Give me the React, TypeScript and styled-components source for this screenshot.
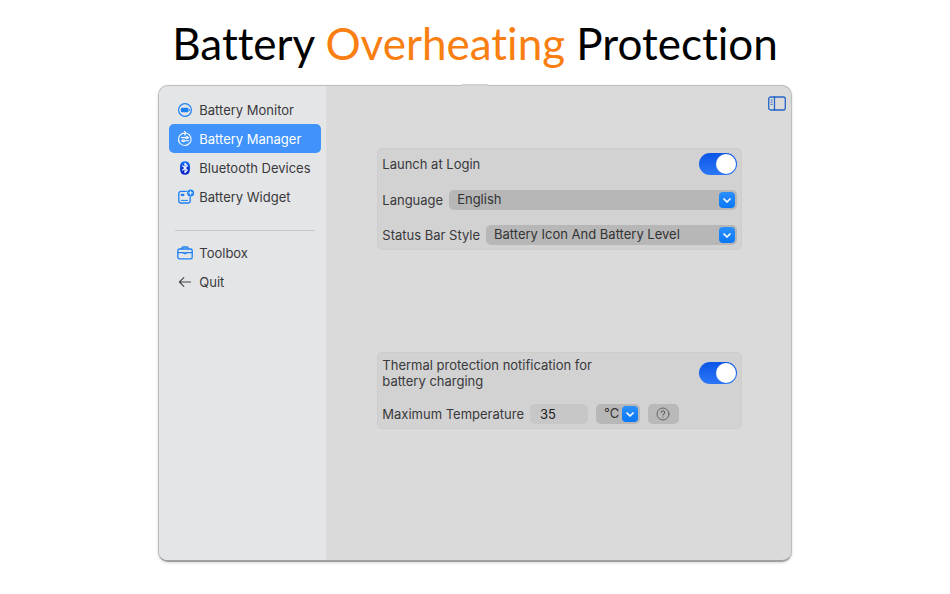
import React, { useState } from "react";
import styled, { createGlobalStyle } from "styled-components";

const GlobalStyle = createGlobalStyle`
  *, *::before, *::after { box-sizing: border-box; }
  body { margin: 0; background: #fff; }
  button, input, select { font: inherit; color: inherit; margin: 0; border: 0; }
`;

const Page = styled.div`
  display: flex;
  flex-direction: column;
  align-items: center;
  min-height: 100vh;
  padding: 0 16px 32px;
  font-family: Inter, "Liberation Sans", sans-serif;
  font-size: 13px;
  line-height: 16px;
  color: #39393b;
`;

const Title = styled.h1`
  margin: 0;
  padding-top: 16px;
  height: 85px;
  font-family: Lato, "Open Sans", sans-serif;
  font-weight: 400;
  font-size: 44px;
  line-height: 54px;
  font-variant-ligatures: none;
  white-space: nowrap;
  color: #000;
`;

const Accent = styled.span`
  color: #fa7f12;
`;

const Window = styled.div`
  position: relative;
  flex: 1;
  display: flex;
  width: 69%;
  background: #dadada;
  border-radius: 10px;
  border: 1px solid #bdbdbd;
  border-bottom: 2px solid #a0a0a0;
  box-shadow: 0 1px 3px rgba(0, 0, 0, 0.16);

  &::before {
    content: "";
    position: absolute;
    top: -2px;
    left: calc(50% - 14px);
    width: 28px;
    height: 2px;
    border-radius: 2px 2px 0 0;
    background: #d2d2d2;
  }
`;

const Sidebar = styled.nav`
  flex: none;
  width: 168px;
  padding: 9px 5px 0 10px;
  background: #e4e5e7;
  border-right: 1px solid #dedbdc;
  border-radius: 9px 0 0 8px;
`;

const NavItem = styled.button<{ $active?: boolean }>`
  display: flex;
  align-items: center;
  gap: 6px;
  width: 100%;
  height: 29px;
  padding: 0 8px;
  border-radius: 5px;
  font-size: 13px;
  white-space: nowrap;
  text-align: left;
  background: ${(p) => (p.$active ? "#4093fb" : "transparent")};
  color: ${(p) => (p.$active ? "#fff" : "#39393b")};
`;

const Icon = styled.svg`
  flex: none;
  width: 16px;
  height: 16px;
  overflow: visible;
  fill: none;
  stroke-linecap: round;
  stroke-linejoin: round;
`;

const Divider = styled.hr`
  height: 1px;
  margin: 19px 6px 7px;
  border: 0;
  background: #c6c7c9;
`;

const Main = styled.main`
  flex: 1;
  min-width: 0;
`;

const Toolbar = styled.header`
  display: flex;
  justify-content: flex-end;
  align-items: flex-start;
  height: 62px;
  padding: 10px 5px 0;
`;

const PlainButton = styled.button`
  display: flex;
  padding: 0;
  background: none;
`;

const Groups = styled.div`
  display: flex;
  flex-direction: column;
  gap: 102px;
  padding: 0 49px 0 50px;
`;

const Group = styled.section`
  display: flex;
  flex-direction: column;
  gap: 15px;
  padding: 4px;
  border: 1px solid #cdcdcd;
  border-radius: 5px;
  background: #d2d2d2;
`;

const Row = styled.div`
  display: flex;
  align-items: center;
  gap: 6px;
`;

const Fields = styled.div`
  display: flex;
  gap: 8px;
`;

const Label = styled.label<{ $grow?: boolean }>`
  flex: ${(p) => (p.$grow ? "1" : "none")};
  max-width: 222px;
`;

const ToggleRow = styled(Row)`
  justify-content: space-between;
`;

const Toggle = styled.input`
  appearance: none;
  flex: none;
  display: flex;
  width: 38px;
  height: 22px;
  padding: 1px;
  border-radius: 11px;
  background: linear-gradient(#0b55e8, #2c77f6);

  &::before {
    content: "";
    width: 20px;
    height: 20px;
    border-radius: 50%;
    background: #fff;
  }
  &:checked { justify-content: flex-end; }
  &:not(:checked) { background: #aaa; }
`;

const SelectBox = styled.div<{ $compact?: boolean }>`
  position: relative;
  flex: ${(p) => (p.$compact ? "none" : "1")};
  width: ${(p) => (p.$compact ? "44px" : "auto")};
  min-width: 0;
`;

const Select = styled.select`
  appearance: none;
  display: block;
  width: 100%;
  height: 20px;
  padding: 0 0 2px 8px;
  border-radius: 5px;
  background: #b7b7b7;
  color: #333;
`;

const Chevron = styled.svg`
  position: absolute;
  top: 2px;
  right: 2px;
  width: 16px;
  height: 16px;
  border-radius: 4px;
  background: linear-gradient(#2a8ffb, #0a78f6);
  pointer-events: none;
`;

const NumberField = styled.input`
  width: 58px;
  height: 20px;
  padding: 0 10px;
  border-radius: 5px;
  background: #c7c7c7;
  color: #222;
`;

const HelpButton = styled.button`
  display: flex;
  align-items: center;
  justify-content: center;
  width: 31px;
  height: 20px;
  padding: 0;
  border-radius: 5px;
  background: #b9b9b9;
`;

const BLUE = "#1d80f5";

const MonitorIcon = () => (
  <Icon viewBox="0 0 16 16">
    <circle cx="8" cy="8" r="6.4" stroke={BLUE} strokeWidth="1.2" />
    <rect x="3.8" y="5.8" width="7.8" height="4.4" rx="1.3" fill={BLUE} />
    <path d="M12.6 7.4v1.2" stroke={BLUE} strokeWidth="0.8" />
  </Icon>
);

const ManagerIcon = () => (
  <Icon viewBox="0 0 16 16" stroke="#fff" strokeWidth="1.1">
    <path d="M10.4 2.5A6.3 6.3 0 1 1 5.4 2.4L8.8 2.2M7.4 0.4l1.8 1.7-1.5 1.9" />
    <path d="M4.6 6.6h4M11 6.6h.6M4.6 9.8h.6M7.6 9.8h4" />
    <circle cx="9.8" cy="6.6" r="1" />
    <circle cx="6.4" cy="9.8" r="1" />
  </Icon>
);

const BluetoothIcon = () => (
  <Icon viewBox="0 0 16 16">
    <defs>
      <linearGradient id="bluetooth" x1="0" y1="0" x2="0" y2="1">
        <stop offset="0" stopColor="#1a78ff" />
        <stop offset="0.5" stopColor="#0637d6" />
        <stop offset="1" stopColor="#0a22c4" />
      </linearGradient>
    </defs>
    <rect x="3.1" y="1.2" width="9.8" height="13.6" rx="4.8" fill="url(#bluetooth)" />
    <path d="M5.6 5.8l4.8 4.4L8 12.6V3.4l2.4 2.4-4.8 4.4" stroke="#fff" strokeWidth="1.1" />
  </Icon>
);

const WidgetIcon = () => (
  <Icon viewBox="0 0 16 16" stroke={BLUE} strokeWidth="1.3">
    <path d="M9.3 2.4H4A2.2 2.2 0 0 0 1.8 4.6v7.2A2.2 2.2 0 0 0 4 14h7a2.2 2.2 0 0 0 2.2-2.2V8.2" />
    <rect x="3.8" y="4.8" width="3.4" height="2.2" rx="0.5" fill={BLUE} stroke="none" />
    <path d="M4.4 11.4h6.2" strokeWidth="1" />
    <circle cx="13.6" cy="3.9" r="3.5" fill={BLUE} stroke="none" />
    <path d="M11.9 3.9h3.4M13.6 2.2v3.4" stroke="#fff" strokeWidth="0.9" />
  </Icon>
);

const ToolboxIcon = () => (
  <Icon viewBox="0 0 16 16" stroke={BLUE} strokeWidth="1.3">
    <rect x="0.8" y="4" width="14.4" height="9.8" rx="1.6" />
    <path d="M5 3.8V3a1 1 0 0 1 1-1h4a1 1 0 0 1 1 1v.8M1 7.6h4.9M10.1 7.6H15" />
    <path d="M5.9 7.4h4.2a2.1 1.7 0 0 1-4.2 0z" fill={BLUE} strokeWidth="0.5" />
  </Icon>
);

const QuitIcon = () => (
  <Icon viewBox="0 0 16 16" stroke="#454547" strokeWidth="1.1">
    <path d="M13.6 8H2.4M6.8 3.6L2.4 8l4.4 4.4" />
  </Icon>
);

const PanelIcon = styled(Icon)`
  width: 18px;
  height: 15px;
`;

const HelpIcon = styled(Icon)`
  width: 14px;
  height: 14px;
`;

type DropDownProps = {
  compact?: boolean;
  id?: string;
  "aria-label"?: string;
  children: React.ReactNode;
};

const DropDown = ({ compact, ...rest }: DropDownProps) => (
  <SelectBox $compact={compact}>
    <Select {...rest} />
    <Chevron viewBox="0 0 16 16" fill="none" stroke="#fff" strokeWidth="1.7" strokeLinecap="round" strokeLinejoin="round">
      <path d="M5 7l3 3 3-3" />
    </Chevron>
  </SelectBox>
);

const topItems = [
  { name: "Battery Monitor", Glyph: MonitorIcon },
  { name: "Battery Manager", Glyph: ManagerIcon },
  { name: "Bluetooth Devices", Glyph: BluetoothIcon },
  { name: "Battery Widget", Glyph: WidgetIcon },
];

const bottomItems = [
  { name: "Toolbox", Glyph: ToolboxIcon },
  { name: "Quit", Glyph: QuitIcon },
];

export default function App() {
  const [temperature, setTemperature] = useState("35");
  return (
    <Page>
      <GlobalStyle />
      <Title>
        Battery <Accent>Overheating</Accent> Protection
      </Title>
      <Window>
        <Sidebar>
          {topItems.map(({ name, Glyph }) => (
            <NavItem key={name} $active={name === "Battery Manager"}>
              <Glyph />
              {name}
            </NavItem>
          ))}
          <Divider />
          {bottomItems.map(({ name, Glyph }) => (
            <NavItem key={name}>
              <Glyph />
              {name}
            </NavItem>
          ))}
        </Sidebar>
        <Main>
          <Toolbar>
            <PlainButton aria-label="Toggle sidebar">
              <PanelIcon viewBox="0 0 18 15" stroke="#2464c8" strokeWidth="1.3">
                <rect x="0.7" y="1" width="16.6" height="13" rx="2" />
                <path d="M6.5 1v13" />
                <path d="M3 4h1.2M3 6.2h1.2M3 8.4h1.2" strokeWidth="0.9" />
              </PanelIcon>
            </PlainButton>
          </Toolbar>
          <Groups>
            <Group>
              <ToggleRow>
                <Label htmlFor="launch">Launch at Login</Label>
                <Toggle id="launch" type="checkbox" defaultChecked />
              </ToggleRow>
              <Row>
                <Label htmlFor="language">Language</Label>
                <DropDown id="language">
                  <option>English</option>
                </DropDown>
              </Row>
              <Row>
                <Label htmlFor="style">Status Bar Style</Label>
                <DropDown id="style">
                  <option>Battery Icon And Battery Level</option>
                </DropDown>
              </Row>
            </Group>
            <Group>
              <ToggleRow>
                <Label htmlFor="thermal" $grow>
                  Thermal protection notification for battery charging
                </Label>
                <Toggle id="thermal" type="checkbox" defaultChecked />
              </ToggleRow>
              <Row>
                <Label htmlFor="maximum">Maximum Temperature</Label>
                <Fields>
                  <NumberField
                    id="maximum"
                    inputMode="numeric"
                    value={temperature}
                    onChange={(e) => setTemperature(e.target.value)}
                  />
                  <DropDown compact aria-label="Temperature unit">
                    <option>°C</option>
                    <option>°F</option>
                  </DropDown>
                  <HelpButton aria-label="Help">
                    <HelpIcon viewBox="0 0 14 14" stroke="#656565" strokeWidth="1">
                      <circle cx="7" cy="7" r="6" />
                      <path d="M5.3 5.5a1.7 1.7 0 1 1 2.6 1.4c-.6.4-.9.6-.9 1.2M7 10v.1" strokeWidth="1.1" />
                    </HelpIcon>
                  </HelpButton>
                </Fields>
              </Row>
            </Group>
          </Groups>
        </Main>
      </Window>
    </Page>
  );
}
